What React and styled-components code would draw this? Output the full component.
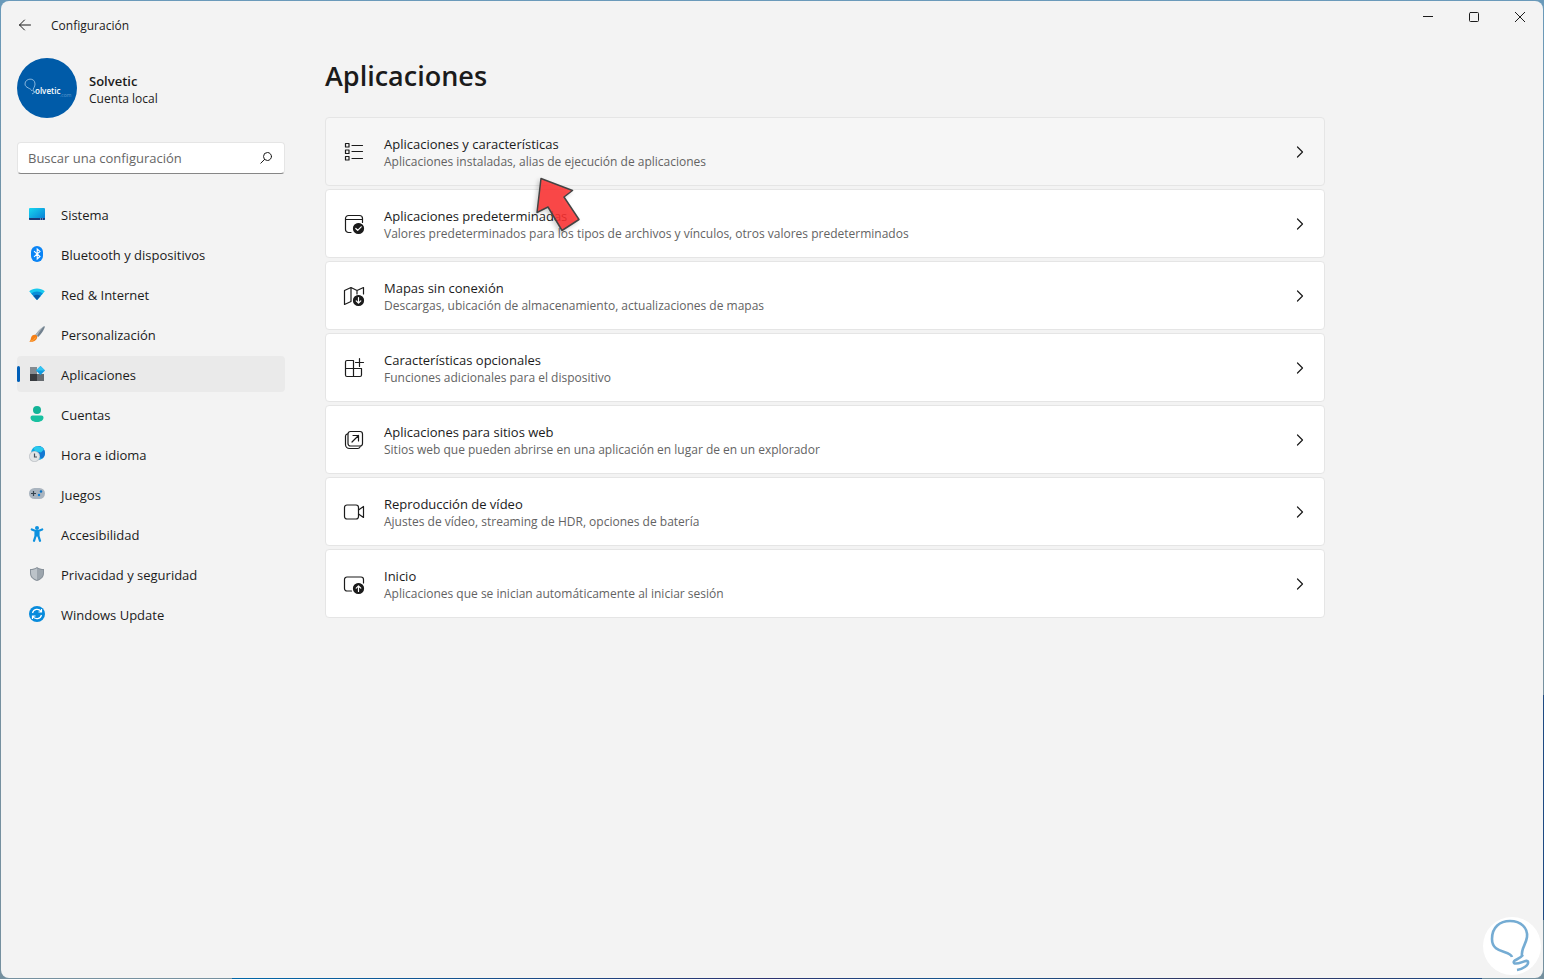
import React from 'react';
import styled, { createGlobalStyle } from 'styled-components';

const GlobalStyle = createGlobalStyle`
  * {
    box-sizing: border-box;
  }

  body {
    margin: 0;
    background: #75909f;
    color: #1b1b1b;
    font: 13px/20px 'Open Sans', 'Noto Sans', sans-serif;
  }

  h1,
  p,
  ul {
    margin: 0;
    padding: 0;
  }

  button,
  input {
    font: inherit;
    color: inherit;
  }

  svg {
    display: block;
    flex: none;
  }
`;

const Desktop = styled.div`
  min-height: 100vh;
  display: flex;
  padding: 1px;
  background:
    linear-gradient(90deg, transparent 15%, #0067a8 15%, #1b4a86 35%, #2c3270 50%, #15568f 62%, #33305c 80%, #1b4a86 96%, transparent 96%)
      bottom / 100% 1px no-repeat,
    linear-gradient(transparent 71%, #1d4a82 71%, #1d4a82 94%, transparent 94%) right / 1px 100% no-repeat,
    linear-gradient(#6a9aba, #75909f 30%);
`;

const Window = styled.div`
  flex: 1;
  display: flex;
  flex-direction: column;
  border-radius: 8px;
  background: #f3f3f3;
`;

const TitleBar = styled.header`
  display: flex;
  justify-content: space-between;
  align-items: flex-start;
  height: 48px;
`;

const TitleGroup = styled.div`
  display: flex;
  align-items: center;
  gap: 3px;
  height: 48px;
  font-size: 12px;
`;

const WindowTitle = styled.span`
  padding-top: 2px;
`;

const IconButton = styled.button`
  display: flex;
  align-items: center;
  justify-content: center;
  width: ${({ $width }) => $width}px;
  height: 32px;
  padding: 0;
  border: 0;
  background: transparent;
`;

const WindowControls = styled.div`
  display: flex;
`;

const Layout = styled.div`
  flex: 1;
  display: grid;
  grid-template-columns: 268px minmax(0, 1000px);
  column-gap: 40px;
  padding: 0 16px;
`;

const Sidebar = styled.aside`
  padding-top: 9px;
`;

const Account = styled.div`
  display: flex;
  align-items: center;
  gap: 12px;
  font-size: 12px;
  line-height: 16px;
`;

const AccountText = styled.div`
  padding-top: 2px;
`;

const AccountName = styled.p`
  font-size: 13px;
  line-height: 20px;
  font-weight: 600;
`;

const SearchBox = styled.label`
  display: flex;
  align-items: center;
  height: 32px;
  margin: 24px 0 22px;
  padding: 0 12px 0 10px;
  border: 1px solid #e5e5e5;
  border-bottom-color: #868686;
  border-radius: 4px;
  background: #fff;
`;

const SearchInput = styled.input`
  flex: 1;
  min-width: 0;
  padding: 0;
  border: 0;
  outline: 0;
  background: transparent;

  &::placeholder {
    color: #666;
    opacity: 1;
  }
`;

const NavList = styled.ul`
  display: grid;
  gap: 4px;
  list-style: none;
`;

const NavLink = styled.a`
  display: flex;
  align-items: center;
  gap: 16px;
  height: 36px;
  padding-right: 12px;
  border-radius: 4px;
  background: ${({ $active }) => ($active ? '#eaeaea' : 'transparent')};
  color: inherit;
  text-decoration: none;

  &::before {
    content: '';
    width: 3px;
    height: 16px;
    margin-right: -7px;
    border-radius: 2px;
    background: ${({ $active }) => ($active ? '#005fb8' : 'transparent')};
  }
`;

const NavLabel = styled.span`
  padding-top: 2px;
`;

const Content = styled.main`
  padding-top: 7px;
`;

const PageTitle = styled.h1`
  font-size: 27px;
  line-height: 40px;
  font-weight: 600;
`;

const CardList = styled.ul`
  display: grid;
  gap: 3px;
  margin-top: 21px;
  list-style: none;
`;

const Card = styled.button`
  display: flex;
  align-items: center;
  gap: 19px;
  width: 100%;
  height: 69px;
  padding: 0 18px 0 17px;
  border: 1px solid #e5e5e5;
  border-radius: 4px;
  background: ${({ $hovered }) => ($hovered ? '#f6f6f6' : '#fff')};
  text-align: left;
`;

const CardText = styled.span`
  flex: 1;
  display: grid;
`;

const CardTitle = styled.span`
  line-height: 20px;
`;

const CardHint = styled.span`
  font-size: 12px;
  line-height: 16px;
  color: #636363;
`;

const Pointer = styled.svg`
  position: absolute;
  left: 534px;
  top: 175px;
  filter: drop-shadow(-2px 2px 2px rgba(0, 0, 0, 0.2));
  pointer-events: none;
`;

const Watermark = styled.svg`
  position: fixed;
  right: 3px;
  bottom: 4px;
`;

const Line = ({ children, size = 22, ...rest }) => (
  <svg
    width={size}
    height={size}
    viewBox={`0 0 ${size} ${size}`}
    fill="none"
    stroke="#1b1b1b"
    strokeWidth="1.2"
    strokeLinecap="round"
    strokeLinejoin="round"
    aria-hidden="true"
    {...rest}
  >
    {children}
  </svg>
);

const Color = ({ children }) => (
  <svg width="16" height="16" viewBox="0 0 16 16" aria-hidden="true">
    {children}
  </svg>
);

const navItems = [
  {
    label: 'Sistema',
    icon: (
      <Color>
        <linearGradient id="screen" x2="1" y2="1">
          <stop stopColor="#17d8f0" />
          <stop offset="1" stopColor="#0878d4" />
        </linearGradient>
        <rect y="2" width="16" height="12" rx="1" fill="url(#screen)" />
        <path d="M0 12h16v1a1 1 0 0 1-1 1H1a1 1 0 0 1-1-1z" fill="#1b3a7a" />
        <path d="M11 13h1m1 0h1" stroke="#a9c5e6" />
      </Color>
    ),
  },
  {
    label: 'Bluetooth y dispositivos',
    icon: (
      <Color>
        <rect x="2" width="12" height="16" rx="6" fill="#0a84f5" />
        <path d="M5 5.2l6 5.3L8.2 13V3L11 5.5l-6 5.3" fill="none" stroke="#fff" strokeWidth="1.1" />
      </Color>
    ),
  },
  {
    label: 'Red & Internet',
    icon: (
      <Color>
        <path d="M.2 5.3C4.5 1.5 11.5 1.5 15.8 5.3L8 14z" fill="#18c9ee" />
        <path d="M2.2 7.5c3.3-2.700 8.300-2.700 11.600 0L8 14z" fill="#078ed8" />
        <path d="M4.4 10c2-1.700 5.200-1.700 7.200 0L8 14z" fill="#075aa9" />
      </Color>
    ),
  },
  {
    label: 'Personalización',
    icon: (
      <Color>
        <path d="M15.8.2c.5 1-2.400 6.800-6.600 10.900L6.400 8.800C9.500 4.500 14.500-.2 15.800.2z" fill="#71808e" />
        <path d="M15.7.1c-2.500 2-5.700 5.900-7.500 9.900L6.400 8.800C9.500 4.500 14.500-.2 15.700.1z" fill="#a9b3bc" />
        <path d="M6 8.700c1.800.3 2.700 1.700 2 3.500C7.100 15 3.300 16.200.3 15.700c1.800-1.600 1.100-3 2.100-5 .7-1.400 2-2.200 3.600-2z" fill="#f57f16" />
        <path d="M2 15c1.500-.5 3.700-1.500 4.500-3.500" fill="none" stroke="#ffac40" />
      </Color>
    ),
  },
  {
    label: 'Aplicaciones',
    active: true,
    icon: (
      <Color>
        <path d="M1 1h7v7H1z" fill="#858b91" />
        <path d="M1 8h7v7H1z" fill="#383b3f" />
        <path d="M8 8h7v7H8z" fill="#666b70" />
        <path d="M11.5 0L16 4.5 11.5 9 7 4.5z" fill="#119be0" />
        <path d="M7 4.5L11.5 0 16 4.5z" fill="#32c4f2" />
      </Color>
    ),
  },
  {
    label: 'Cuentas',
    icon: (
      <Color>
        <circle cx="8" cy="4" r="4" fill="#12b397" />
        <path d="M3.5 9.5h9a2 2 0 0 1 2 2c0 3-3 4.500-6.500 4.500s-6.500-1.500-6.500-4.500a2 2 0 0 1 2-2z" fill="#18c0a0" />
      </Color>
    ),
  },
  {
    label: 'Hora e idioma',
    icon: (
      <Color>
        <circle cx="9" cy="7" r="7" fill="#12a8e2" />
        <path d="M9 0a7 7 0 0 1 4 12.700C10 11 9 9 9 7z" fill="#1478d2" />
        <path d="M4.5 2C8-.8 13 0 15 3.500L12 6.500 6 5z" fill="#29c9ed" />
        <circle cx="5.5" cy="10.5" r="5.500" fill="#c3c7cb" />
        <circle cx="5.5" cy="10.5" r="4.700" fill="#e2e5e7" />
        <path d="M5.5 7.5V11H8" fill="none" stroke="#45505b" strokeWidth="1.200" />
      </Color>
    ),
  },
  {
    label: 'Juegos',
    icon: (
      <Color>
        <rect y="2" width="16" height="11" rx="5.500" fill="#a9b4bf" />
        <path d="M4.5 5v5M2 7.500h5" stroke="#36434f" strokeWidth="1.200" />
        <circle cx="12" cy="5.500" r="1.200" fill="#096fbe" />
        <circle cx="10" cy="9" r="1.200" fill="#0a80dc" />
      </Color>
    ),
  },
  {
    label: 'Accesibilidad',
    icon: (
      <Color>
        <circle cx="8" cy="2" r="2" fill="#0c91df" />
        <path
          d="M2.8 3.5L6.5 5h3l3.700-1.500M9.500 5v5l1.500 4.800M6.500 5v5L5 14.800"
          fill="none"
          stroke="#0c91df"
          strokeWidth="2.2"
          strokeLinecap="round"
        />
        <path d="M6 5h4v5.500H6z" fill="#0c91df" />
      </Color>
    ),
  },
  {
    label: 'Privacidad y seguridad',
    icon: (
      <Color>
        <path d="M8 1c2 1.500 4.300 2 7 2v4c0 4-2.500 6.500-7 8-4.500-1.500-7-4-7-8V3c2.700 0 5-.5 7-2z" fill="#88919a" />
        <path d="M8 2.200C6.200 3.400 4.200 4 2 4v3c0 3.500 2 5.500 6 7z" fill="#bcc3c9" />
        <path d="M8 2.200C9.800 3.400 11.800 4 14 4v3c0 3.500-2 5.500-6 7z" fill="#9ca5ad" />
      </Color>
    ),
  },
  {
    label: 'Windows Update',
    icon: (
      <Color>
        <circle cx="8" cy="8" r="8" fill="#078bdc" />
        <path
          d="M3.5 7a4.700 4.700 0 0 1 8.500-1.500M12.500 3v3h-3M12.500 9A4.700 4.700 0 0 1 4 10.500M3.500 13v-3h3"
          fill="none"
          stroke="#fff"
          strokeWidth="1.2"
        />
      </Color>
    ),
  },
];

const cards = [
  {
    title: 'Aplicaciones y características',
    hint: 'Aplicaciones instaladas, alias de ejecución de aplicaciones',
    hovered: true,
    icon: (
      <Line>
        <path d="M2.5 2.500h3.500v3.500H2.500zM2.500 9h3.500v3.500H2.500zM2.500 15.500h3.500v3.500H2.500zM9 4.500h10.500M9 10.500h10.500M9 17.500h10.500" />
      </Line>
    ),
  },
  {
    title: 'Aplicaciones predeterminadas',
    hint: 'Valores predeterminados para los tipos de archivos y vínculos, otros valores predeterminados',
    icon: (
      <Line>
        <path d="M8 19.5H5.500a3 3 0 0 1-3-3v-11a3 3 0 0 1 3-3h11a3 3 0 0 1 3 3v4M2.500 6.500h17" />
        <circle cx="15.5" cy="15.5" r="5" fill="#1b1b1b" />
        <path d="M12.8 15.500l1.900 1.900 3.500-3.600" stroke="#fff" />
      </Line>
    ),
  },
  {
    title: 'Mapas sin conexión',
    hint: 'Descargas, ubicación de almacenamiento, actualizaciones de mapas',
    icon: (
      <Line>
        <path d="M8 16.500l-6.500 3V5.500L8 2.500l6 3 6.500-3V9M8 2.500v14M14 5.500v3.500" />
        <circle cx="15.5" cy="15.5" r="5" fill="#1b1b1b" />
        <path d="M15.5 12.500v5.500M13.200 15.900l2.300 2.300 2.300-2.300" stroke="#fff" />
      </Line>
    ),
  },
  {
    title: 'Características opcionales',
    hint: 'Funciones adicionales para el dispositivo',
    icon: (
      <Line>
        <path d="M10 3.500H4A1.500 1.500 0 0 0 2.500 5v13A1.500 1.500 0 0 0 4 19.500h13a1.500 1.500 0 0 0 1.500-1.500v-6.500h-16M10.500 3.500v16M16.500 1.500v8M12.500 5.500h8" />
      </Line>
    ),
  },
  {
    title: 'Aplicaciones para sitios web',
    hint: 'Sitios web que pueden abrirse en una aplicación en lugar de en un explorador',
    icon: (
      <Line>
        <rect x="5" y="2.500" width="14.500" height="14.500" rx="2.500" />
        <path d="M4.5 4.800A2.500 2.500 0 0 0 2.500 7v8.500a4 4 0 0 0 4 4H15a2.500 2.500 0 0 0 2.200-2M9 13l6.500-6.500M10 6.500h5.500V12" />
      </Line>
    ),
  },
  {
    title: 'Reproducción de vídeo',
    hint: 'Ajustes de vídeo, streaming de HDR, opciones de batería',
    icon: (
      <Line>
        <rect x="1.5" y="4" width="14" height="14" rx="2.500" />
        <path d="M15.5 9l5-3.500v11l-5-3.500" />
      </Line>
    ),
  },
  {
    title: 'Inicio',
    hint: 'Aplicaciones que se inician automáticamente al iniciar sesión',
    icon: (
      <Line>
        <path d="M8.5 18H4a2.500 2.500 0 0 1-2.500-2.500v-9A2.500 2.500 0 0 1 4 4h14a2.500 2.500 0 0 1 2.500 2.500V10" />
        <circle cx="15.5" cy="15.5" r="5" fill="#1b1b1b" />
        <path d="M15.5 18.500V13M13.200 15.100l2.300-2.300 2.300 2.300" stroke="#fff" />
      </Line>
    ),
  },
];

const Avatar = () => (
  <svg width="60" height="60" viewBox="0 0 60 60" role="img" aria-label="Solvetic">
    <circle cx="30" cy="30" r="30" fill="#005ba8" />
    <path d="M15 33c-1-3-7-3-7-7 0-6 10-7 10 0 0 3-2 4-2 7l2 1-3 2" fill="none" stroke="#a9cbe8" strokeWidth=".8" />
    <text x="18" y="36" fontSize="8" fontWeight="600" fill="#fff">
      olvetic
    </text>
    <text x="43" y="39" fontSize="5" fill="#5d9bd0">
      .com
    </text>
  </svg>
);

const App = () => (
  <Desktop>
    <GlobalStyle />
    <Window>
      <TitleBar>
        <TitleGroup>
          <IconButton $width={47} aria-label="Atrás">
            <Line size={14} strokeWidth="1">
              <path d="M12.5 7H1.500M6.500 2l-5 5 5 5" />
            </Line>
          </IconButton>
          <WindowTitle>Configuración</WindowTitle>
        </TitleGroup>
        <WindowControls>
          <IconButton $width={46} aria-label="Minimizar">
            <Line size={10} strokeWidth="1">
              <path d="M0 4.500h10" />
            </Line>
          </IconButton>
          <IconButton $width={46} aria-label="Maximizar">
            <Line size={10} strokeWidth="1">
              <rect x=".5" y=".5" width="9" height="9" rx="1" />
            </Line>
          </IconButton>
          <IconButton $width={46} aria-label="Cerrar">
            <Line size={10} strokeWidth="1">
              <path d="M0 0l10 10M10 0L0 10" />
            </Line>
          </IconButton>
        </WindowControls>
      </TitleBar>
      <Layout>
        <Sidebar>
          <Account>
            <Avatar />
            <AccountText>
              <AccountName>Solvetic</AccountName>
              <p>Cuenta local</p>
            </AccountText>
          </Account>
          <SearchBox>
            <SearchInput type="text" placeholder="Buscar una configuración" aria-label="Buscar una configuración" />
            <Line size={12} strokeWidth="1">
              <circle cx="7.5" cy="4.5" r="4" />
              <path d="M4.7 7.300L.8 11.200" />
            </Line>
          </SearchBox>
          <nav>
            <NavList>
              {navItems.map(({ label, icon, active }) => (
                <li key={label}>
                  <NavLink href="#" $active={active} aria-current={active ? 'page' : undefined}>
                    {icon}
                    <NavLabel>{label}</NavLabel>
                  </NavLink>
                </li>
              ))}
            </NavList>
          </nav>
        </Sidebar>
        <Content>
          <PageTitle>Aplicaciones</PageTitle>
          <CardList>
            {cards.map(({ title, hint, icon, hovered }) => (
              <li key={title}>
                <Card $hovered={hovered}>
                  {icon}
                  <CardText>
                    <CardTitle>{title}</CardTitle>
                    <CardHint>{hint}</CardHint>
                  </CardText>
                  <Line size={12}>
                    <path d="M3.5 1l5 5-5 5" />
                  </Line>
                </Card>
              </li>
            ))}
          </CardList>
        </Content>
      </Layout>
    </Window>
    <Pointer width="48" height="58" viewBox="0 0 48 58" aria-hidden="true">
      <path
        d="M7 3.500l31.500 12-8.500 6.500 15 22.500-17 11L14 32 3 37.500z"
        fill="#ff3030"
        fillOpacity=".86"
        stroke="#444"
        strokeWidth="1.5"
        strokeLinejoin="round"
      />
    </Pointer>
    <Watermark width="58" height="58" viewBox="0 0 58 58" aria-hidden="true">
      <circle cx="29" cy="29" r="29" fill="#fff" />
      <path d="M29 40c-2-7-20-3-20-18C9 10 17 4 27 4c11 0 18 7 17 16-1 8-6 11-5 19" fill="none" stroke="#75acd3" strokeWidth="2.6" />
      <path d="M40 38c-4 5-11 5-9 8 3 3 14-5 14-1 1 3-5 7-11 8" fill="none" stroke="#75acd3" strokeWidth="2.6" />
    </Watermark>
  </Desktop>
);

export default App;
